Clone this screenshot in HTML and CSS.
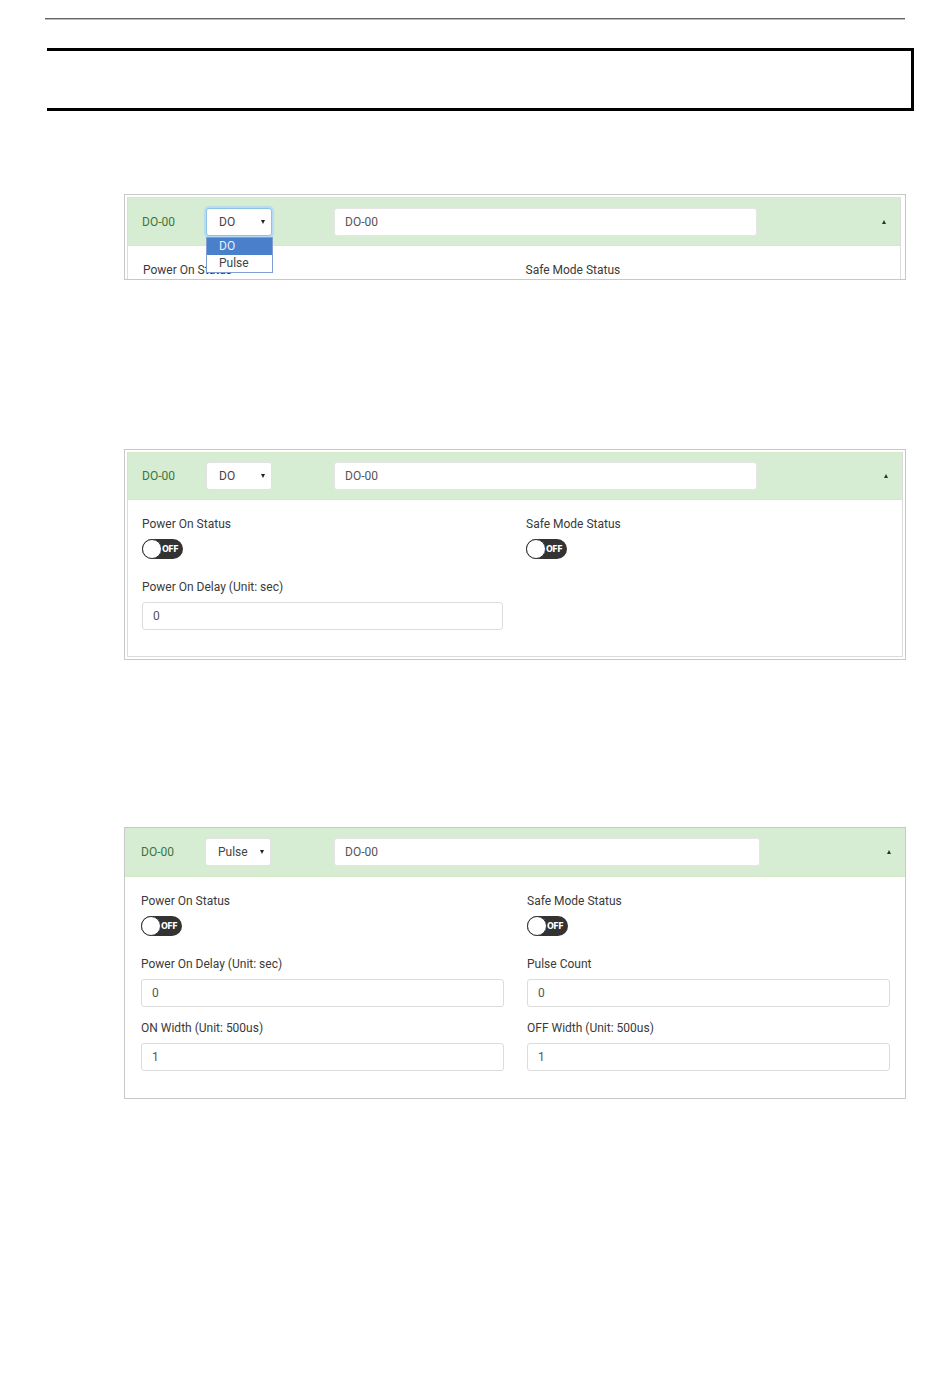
FILE: index.html
```html
<!DOCTYPE html>
<html>
<head>
<meta charset="utf-8">
<link rel="stylesheet" href="styles.css">
</head>
<body>
<div class="rule"></div>
<div class="frame"></div>

<!-- Panel 1: dropdown open -->
<div class="panel panel-a">
  <div class="inner">
    <div class="head head-a">
      <span class="title">DO-00</span>
      <div class="select-wrap">
        <div class="select focus"><span>DO</span><i class="down"></i></div>
        <ul class="menu">
          <li class="sel">DO</li>
          <li>Pulse</li>
        </ul>
      </div>
      <div class="text-input head-input">DO-00</div>
      <i class="up"></i>
    </div>
    <div class="body">
      <div class="field"><div class="label">Power On Status</div></div>
      <div class="field"><div class="label">Safe Mode Status</div></div>
    </div>
  </div>
</div>

<!-- Panel 2: DO -->
<div class="panel panel-b">
  <div class="inner">
    <div class="head head-b">
      <span class="title">DO-00</span>
      <div class="select-wrap">
        <div class="select"><span>DO</span><i class="down"></i></div>
      </div>
      <div class="text-input head-input">DO-00</div>
      <i class="up"></i>
    </div>
    <div class="body">
      <div class="field">
        <div class="label">Power On Status</div>
        <div class="toggle"><span class="knob"></span><span class="off">OFF</span></div>
      </div>
      <div class="field">
        <div class="label">Safe Mode Status</div>
        <div class="toggle"><span class="knob"></span><span class="off">OFF</span></div>
      </div>
      <div class="field">
        <div class="label">Power On Delay (Unit: sec)</div>
        <div class="text-input">0</div>
      </div>
    </div>
  </div>
</div>

<!-- Panel 3: Pulse -->
<div class="panel panel-c">
  <div class="head head-c">
    <span class="title">DO-00</span>
    <div class="select-wrap">
      <div class="select"><span>Pulse</span><i class="down"></i></div>
    </div>
    <div class="text-input head-input">DO-00</div>
    <i class="up"></i>
  </div>
  <div class="body">
    <div class="field">
      <div class="label">Power On Status</div>
      <div class="toggle"><span class="knob"></span><span class="off">OFF</span></div>
    </div>
    <div class="field">
      <div class="label">Safe Mode Status</div>
      <div class="toggle"><span class="knob"></span><span class="off">OFF</span></div>
    </div>
    <div class="field">
      <div class="label">Power On Delay (Unit: sec)</div>
      <div class="text-input">0</div>
    </div>
    <div class="field">
      <div class="label">Pulse Count</div>
      <div class="text-input">0</div>
    </div>
    <div class="field">
      <div class="label">ON Width (Unit: 500us)</div>
      <div class="text-input">1</div>
    </div>
    <div class="field">
      <div class="label">OFF Width (Unit: 500us)</div>
      <div class="text-input">1</div>
    </div>
  </div>
</div>
</body>
</html>
```
FILE: styles.css
```css
* { box-sizing: border-box; }
html, body { margin: 0; padding: 0; background: #fff; }
body {
  font-family: Roboto, "Liberation Sans", Arial, sans-serif;
  font-size: 12px;
  color: #333;
  padding-bottom: 20px;
}

.rule {
  margin: 18px 0 0 45px;
  width: 860px;
  height: 1px;
  background: #666;
  box-shadow: 0 1px 0 #bdbdbd;
}

.frame {
  margin: 29px 0 0 47px;
  width: 867px;
  height: 63px;
  border-top: 3px solid #000;
  border-bottom: 3px solid #000;
  border-right: 3px solid #000;
}

.panel {
  width: 782px;
  margin-left: 124px;
  border: 1px solid #c8c8c8;
}
.panel-a {
  margin-top: 83px;
  height: 86px;
  padding: 2px 4px 0 2px;
  overflow: hidden;
}
.panel-b {
  margin-top: 169px;
  padding: 2px 2px 2px 2px;
}
.panel-c {
  margin-top: 167px;
}

.inner {
  border: 1px solid #dcdcdc;
  border-top-color: #d6e9c6;
}

.head {
  display: flex;
  align-items: center;
  background: #d6ecd3;
  border-bottom: 1px solid #d6e9c6;
  padding: 0 14px 0 14px;
}
.head-a { height: 48px; }
.head-b { height: 47px; }
.head-c { height: 49px; padding-left: 16px; }

.title {
  width: 64px;
  color: #3c763d;
  font-size: 12px;
}

.select-wrap {
  position: relative;
  width: 66px;
  margin-right: 62px;
}
.head-c .select-wrap { margin-right: 63px; }
.select {
  display: flex;
  align-items: center;
  justify-content: space-between;
  height: 28px;
  padding: 0 6px 0 12px;
  background: #fff;
  border: 1px solid #e2e2e2;
  border-radius: 3px;
  color: #444;
}
.select.focus {
  border-color: #8fc3e6;
  box-shadow: 0 0 1px 2px #b5dcf2;
}
.down {
  display: block;
  width: 0;
  height: 0;
  border-left: 2px solid transparent;
  border-right: 2px solid transparent;
  border-top: 4px solid #222;
}

.menu {
  position: absolute;
  top: 29px;
  left: 0;
  width: 67px;
  margin: 0;
  padding: 0;
  list-style: none;
  background: #fff;
  border: 1px solid #7f9fd4;
  z-index: 2;
}
.menu li {
  height: 17px;
  line-height: 17px;
  padding-left: 12px;
  color: #444;
}
.menu li.sel {
  background: #4a7fcc;
  color: #e8eef9;
}

.text-input {
  height: 28px;
  line-height: 26px;
  padding-left: 10px;
  background: #fff;
  border: 1px solid #dcdcdc;
  border-radius: 3px;
  color: #555;
}
.head-input {
  width: 423px;
  border-color: #e6e6e6;
}
.head-c .head-input { width: 426px; }

.up {
  display: block;
  margin-left: auto;
  width: 0;
  height: 0;
  border-left: 2px solid transparent;
  border-right: 2px solid transparent;
  border-bottom: 4px solid #1f3a2a;
}

.body {
  display: grid;
  grid-template-columns: 1fr 1fr;
  column-gap: 23px;
  padding: 16px 15px 1px 15px;
}
.panel-c .body { padding: 16px 15px 14px 16px; }
.panel-b .body { padding: 16px 15px 13px 14px; }

.field { margin-bottom: 13px; }
.label {
  line-height: 16px;
  margin-bottom: 7px;
  color: #3a3a3a;
}

.toggle {
  display: flex;
  align-items: center;
  width: 41px;
  height: 20px;
  margin-bottom: 7px;
  background: #333;
  border-radius: 10px;
}
.knob {
  flex: none;
  width: 20px;
  height: 20px;
  border-radius: 50%;
  background: #fff;
  border: 1.5px solid #333;
}
.off {
  margin-left: 0;
  color: #fff;
  font-family: "DejaVu Sans Condensed", "DejaVu Sans", sans-serif;
  font-weight: bold;
  font-size: 9px;
  letter-spacing: -0.6px;
}
```
